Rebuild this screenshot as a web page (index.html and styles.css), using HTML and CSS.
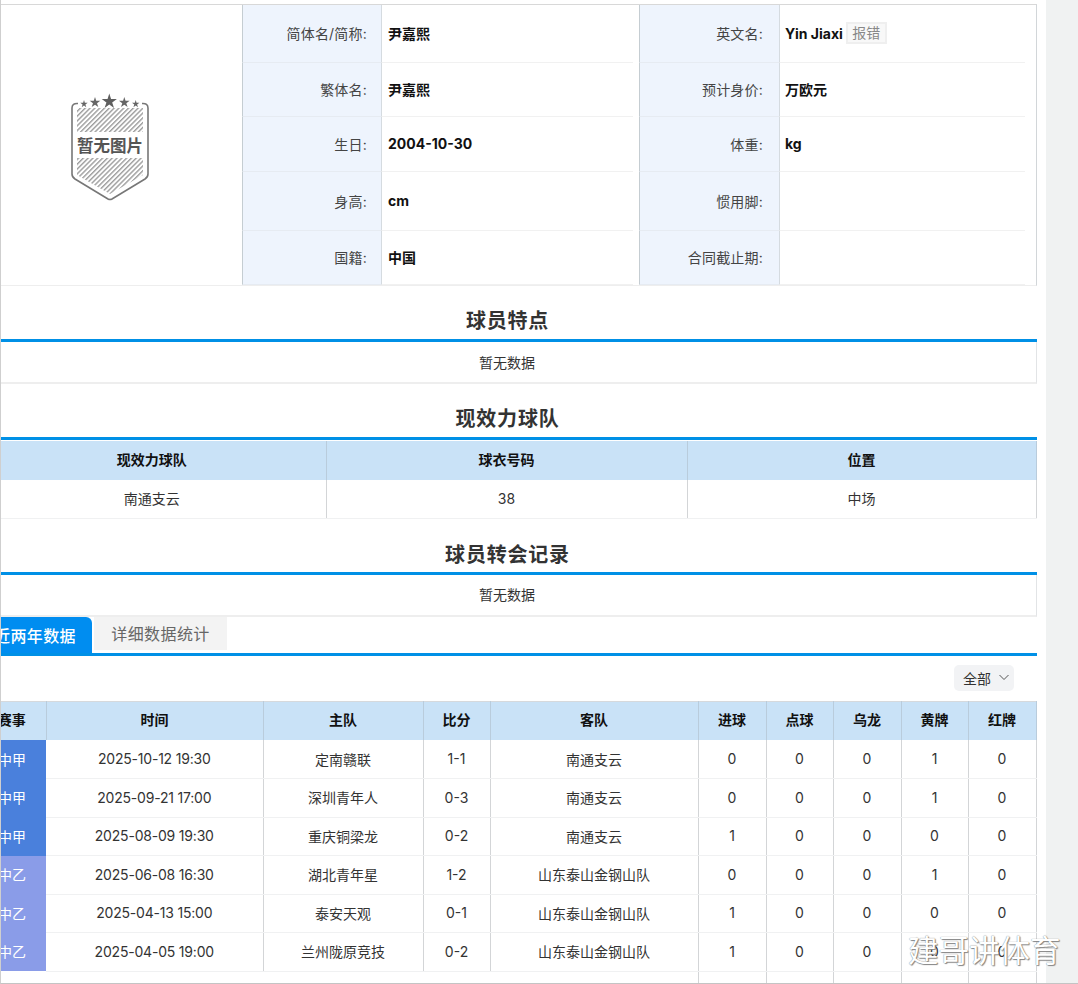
FILE: index.html
```html
<!DOCTYPE html>
<html lang="zh">
<head>
<meta charset="utf-8">
<title>尹嘉熙</title>
<link rel="stylesheet" href="styles.css">
</head>
<body>
<div class="frame">
  <main class="main">
    <div class="content">
      <section class="info">
        <div class="photo">
          <svg class="badge" width="264" height="280" viewBox="-22 5 264 280" aria-hidden="true">
            <defs>
              <pattern id="hatch" width="3.4" height="3.4" patternUnits="userSpaceOnUse" patternTransform="rotate(-45 0 0)">
                <rect width="3.4" height="1.4" fill="#9c9c9c"/>
              </pattern>
              <polygon id="star" points="0,-1 .22,-.31 .95,-.31 .36,.12 .59,.81 0,.38 -.59,.81 -.36,.12 -.95,-.31 -.22,-.31"/>
            </defs>
            <path d="M77 108 L143 108 L143 132 L77 132 Z M77 158 L143 158 L143 175 L110 194 L77 175 Z" fill="url(#hatch)"/>
            <path d="M78 103.5 Q72 103 72 108 L72 174 Q72 177 75 179 L108 199 Q110 200 112 199 L145 179 Q148 177 148 174 L148 108 Q148 103 142 103.5" fill="none" stroke="#777" stroke-width="1.6"/>
            <use href="#star" transform="translate(109.3 101.5) scale(8)" fill="#5f5f5f"/>
            <use href="#star" transform="translate(95 102.5) scale(5.6)" fill="#666"/>
            <use href="#star" transform="translate(124.3 102.5) scale(5.6)" fill="#666"/>
            <use href="#star" transform="translate(84 104) scale(3.9)" fill="#666"/>
            <use href="#star" transform="translate(135.7 104) scale(3.9)" fill="#666"/>
            <text class="badge-text" x="110" y="152" text-anchor="middle">暂无图片</text>
          </svg>
        </div>
        <div class="label">简体名/简称:</div>
        <div class="value"><b>尹嘉熙</b></div>
        <div class="label">英文名:</div>
        <div class="value"><b>Yin Jiaxi</b><button class="report" type="button">报错</button></div>
        <div class="label">繁体名:</div>
        <div class="value"><b>尹嘉熙</b></div>
        <div class="label">预计身价:</div>
        <div class="value"><b>万欧元</b></div>
        <div class="label">生日:</div>
        <div class="value"><b>2004-10-30</b></div>
        <div class="label">体重:</div>
        <div class="value"><b>kg</b></div>
        <div class="label">身高:</div>
        <div class="value"><b>cm</b></div>
        <div class="label">惯用脚:</div>
        <div class="value"></div>
        <div class="label">国籍:</div>
        <div class="value"><b>中国</b></div>
        <div class="label">合同截止期:</div>
        <div class="value"></div>
      </section>

      <h2 class="heading">球员特点</h2>
      <div class="empty empty-first">暂无数据</div>

      <h2 class="heading">现效力球队</h2>
      <table class="team">
        <colgroup><col class="c-team"><col class="c-num"><col class="c-pos"></colgroup>
        <thead><tr><th>现效力球队</th><th>球衣号码</th><th>位置</th></tr></thead>
        <tbody><tr><td>南通支云</td><td>38</td><td>中场</td></tr></tbody>
      </table>

      <h2 class="heading heading-tall">球员转会记录</h2>
      <div class="empty">暂无数据</div>

      <nav class="tabs">
        <a class="tab tab-active">近两年数据</a>
        <a class="tab">详细数据统计</a>
      </nav>

      <div class="toolbar">
        <div class="select">全部
          <svg width="10" height="7" viewBox="0 0 10 7" aria-hidden="true"><path d="M.5 1 L5 5.5 L9.5 1" fill="none" stroke="#555" stroke-width="1"/></svg>
        </div>
      </div>

      <table class="matches">
        <colgroup>
          <col class="m1"><col class="m2"><col class="m3"><col class="m4"><col class="m5">
          <col class="m6"><col class="m7"><col class="m8"><col class="m9"><col class="m10">
        </colgroup>
        <thead>
          <tr><th>赛事</th><th>时间</th><th>主队</th><th>比分</th><th>客队</th><th>进球</th><th>点球</th><th>乌龙</th><th>黄牌</th><th>红牌</th></tr>
        </thead>
        <tbody>
          <tr><td class="lg lg-a">中甲</td><td class="date">2025-10-12 19:30</td><td>定南赣联</td><td>1-1</td><td>南通支云</td><td>0</td><td>0</td><td>0</td><td>1</td><td>0</td></tr>
          <tr><td class="lg lg-a">中甲</td><td class="date">2025-09-21 17:00</td><td>深圳青年人</td><td>0-3</td><td>南通支云</td><td>0</td><td>0</td><td>0</td><td>1</td><td>0</td></tr>
          <tr><td class="lg lg-a">中甲</td><td class="date">2025-08-09 19:30</td><td>重庆铜梁龙</td><td>0-2</td><td>南通支云</td><td>1</td><td>0</td><td>0</td><td>0</td><td>0</td></tr>
          <tr><td class="lg lg-b">中乙</td><td class="date">2025-06-08 16:30</td><td>湖北青年星</td><td>1-2</td><td>山东泰山金钢山队</td><td>0</td><td>0</td><td>0</td><td>1</td><td>0</td></tr>
          <tr><td class="lg lg-b">中乙</td><td class="date">2025-04-13 15:00</td><td>泰安天观</td><td>0-1</td><td>山东泰山金钢山队</td><td>1</td><td>0</td><td>0</td><td>0</td><td>0</td></tr>
          <tr><td class="lg lg-b">中乙</td><td class="date">2025-04-05 19:00</td><td>兰州陇原竞技</td><td>0-2</td><td>山东泰山金钢山队</td><td>1</td><td>0</td><td>0</td><td>0</td><td>0</td></tr>
          <tr class="tail"><td class="tail-blank" colspan="5"></td><td></td><td></td><td></td><td></td><td></td></tr>
        </tbody>
      </table>
    </div>
  </main>
  <aside class="strip"></aside>
  <div class="watermark">建哥讲体育</div>
</div>
</body>
</html>
```

FILE: styles.css
```css
* { box-sizing: border-box; }

html, body {
  margin: 0;
  padding: 0;
  background: #fff;
}

body {
  font-family: Inter, "Noto Sans CJK SC", sans-serif;
  font-size: 14px;
  color: #222;
}

.frame {
  position: relative;
  display: flex;
  width: 1078px;
  height: 984px;
  overflow: hidden;
  background: #fff;
}

.frame::after {
  content: "";
  position: absolute;
  inset: 0;
  border-left: 1px solid #cfcfcf;
  border-bottom: 1px solid #c4c4c4;
  pointer-events: none;
}

.main {
  width: 1046px;
  flex: none;
  padding-top: 4px;
}

.content {
  width: 1059px;
  margin-left: -22px;
}

.strip {
  flex: 1;
  background: #f0f2f2;
}

/* profile block */
.info {
  display: grid;
  grid-template-columns: 264px 139px 258px 140px 257px;
  grid-template-rows: 58px 54px 55px 59px 54px;
  border-top: 1px solid #d8d8d8;
  border-right: 1px solid #d2d6d9;
  border-bottom: 1px solid #eeeeee;
}

.photo {
  grid-row: 1 / span 5;
  display: flex;
}

.badge { display: block; }

.badge-text {
  font-family: "Noto Sans CJK SC", sans-serif;
  font-size: 16.5px;
  font-weight: 700;
  fill: #555;
}

.label {
  display: flex;
  align-items: center;
  justify-content: flex-end;
  padding-right: 14px;
  padding-bottom: 1px;
  background: #eef4fd;
  border-left: 1px solid #c5cdd2;
  border-bottom: 1px solid #e6ebf2;
  font-size: 14px;
  letter-spacing: 0.2px;
  color: #444;
}

.label:nth-child(4n) { padding-right: 16px; }

.value {
  display: flex;
  align-items: center;
  padding-left: 6px;
  padding-bottom: 1px;
  margin-right: 6px;
  border-left: 1px solid #d5dbe0;
  border-bottom: 1px solid #f1f1f1;
}

.value:nth-child(4n+1) {
  padding-left: 5px;
  margin-right: 11px;
}

.value b {
  color: #111;
  font-weight: 700;
  font-size: 14px;
}

.report {
  margin-left: 3px;
  width: 41px;
  height: 22px;
  padding: 0;
  border: 2px solid #efefef;
  background: #f8f8f8;
  font: inherit;
  font-size: 14px;
  line-height: 16px;
  color: #888;
}

/* section headings */
.heading {
  height: 56px;
  margin: 0;
  padding-top: 20px;
  border-bottom: 3px solid #0090e6;
  text-align: center;
  font-size: 20px;
  line-height: 30px;
  font-weight: 700;
  letter-spacing: 0.8px;
  color: #333;
}

.heading-tall { padding-top: 21px; }

.empty {
  height: 42px;
  padding-top: 1px;
  border-right: 1px solid #e2e4e6;
  border-bottom: 2px solid #eeeeee;
  text-align: center;
  font-size: 14px;
  line-height: 37px;
  color: #333;
}

.empty-first { padding-top: 2px; }

/* current team */
.team, .matches {
  width: 1058px;
  table-layout: fixed;
  border-collapse: collapse;
}

.team th, .matches th {
  background: #c9e2f7;
  color: #111;
  font-weight: 700;
  font-size: 14px;
  padding: 0 0 3px;
  text-align: center;
  border-right: 1px solid #b9ccdc;
}

.team td, .matches td {
  padding: 0 0 1px;
  text-align: center;
  font-size: 14px;
  color: #333;
  border-right: 1px solid #d3d5d7;
  border-bottom: 1px solid #f0f1f2;
}

.matches td.date { letter-spacing: -0.2px; }

.team { margin-top: 1px; }
.team thead tr { height: 39px; }
.team tbody tr { height: 38px; }
.c-team { width: 348px; }
.c-num { width: 361px; }
.c-pos { width: 349px; }

/* tabs */
.tabs {
  display: flex;
  height: 39px;
  align-items: flex-end;
  gap: 2px;
  border-bottom: 3px solid #0090e6;
}

.tab {
  display: flex;
  align-items: center;
  justify-content: center;
  font-size: 16px;
  letter-spacing: 0.4px;
}

.tab-active {
  width: 114px;
  height: 36px;
  border-top-right-radius: 6px;
  background: #008df0;
  color: #fff;
  font-weight: 500;
}

.tab:not(.tab-active) {
  width: 133px;
  height: 33px;
  margin-bottom: 3px;
  background: #f3f3f3;
  color: #666;
}

/* filter */
.toolbar {
  display: flex;
  justify-content: flex-end;
  height: 45px;
  padding: 9px 23px 0 0;
}

.select {
  display: flex;
  align-items: center;
  gap: 8px;
  width: 60px;
  height: 26px;
  padding-left: 9px;
  border-radius: 5px;
  background: #f2f3f5;
  font-size: 14px;
  color: #333;
}

/* matches */
.matches { border-top: 1px solid #d6d9dc; }
.matches thead tr { height: 39px; }
.matches tbody tr { height: 38.5px; }
.matches tbody tr.tail { height: 12px; }
.matches td.tail-blank { border-right: 1px solid #d3d5d7; border-bottom: 0; }
.matches tr.tail td { border-bottom: 0; }
.matches td.lg { color: #fff; border-right: 0; border-bottom: 0; font-size: 14px; }
.lg-a { background: #4a80dc; }
.lg-b { background: #8a9ce8; }
.m1 { width: 68px; }
.m2 { width: 217px; }
.m3 { width: 160px; }
.m4 { width: 67px; }
.m5 { width: 208px; }
.m6 { width: 68px; }
.m7 { width: 67px; }
.m8 { width: 68px; }
.m9 { width: 67px; }
.m10 { width: 68px; }

/* image watermark */
.watermark {
  position: absolute;
  left: 908px;
  top: 929px;
  font-family: "Noto Sans CJK SC", sans-serif;
  font-size: 30.5px;
  line-height: 40px;
  color: #fff;
  text-shadow: 0 0 1px #666, 1px 1px 1px #888;
  white-space: nowrap;
}
```
